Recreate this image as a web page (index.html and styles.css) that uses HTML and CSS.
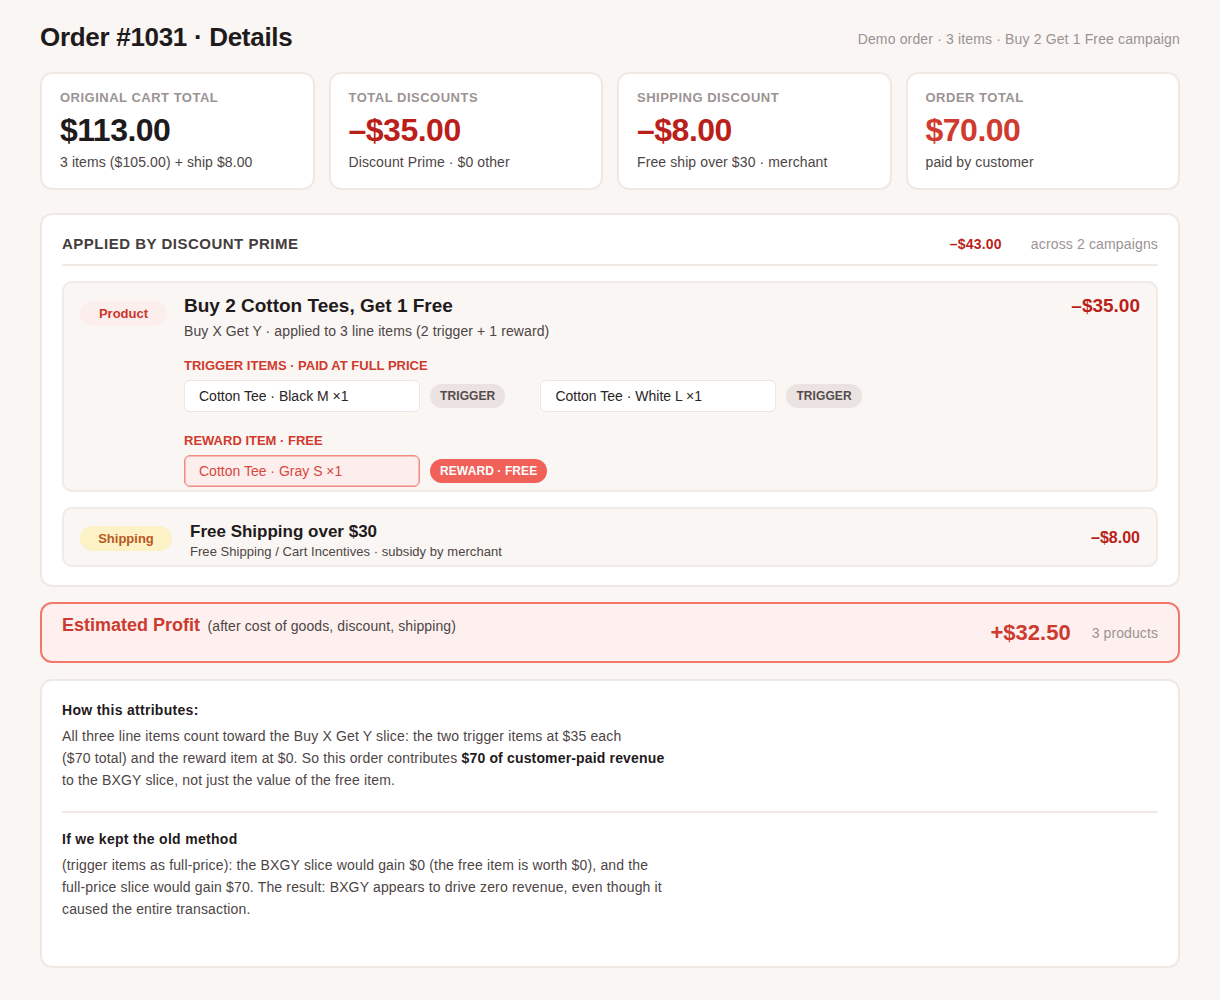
FILE: index.html
```html
<!DOCTYPE html>
<html lang="en">
<head>
    <meta charset="UTF-8">
    <title>Order #1031 · Details</title>
    <link rel="stylesheet" href="styles.css">
</head>
<body>
    <div class="page">
        <div class="page-head">
            <h1>Order #1031 · Details</h1>
            <div class="page-meta">Demo order · 3 items · Buy 2 Get 1 Free campaign</div>
        </div>

        <div class="stats">
            <div class="stat">
                <div class="stat-label">Original cart total</div>
                <div class="stat-value">$113.00</div>
                <div class="stat-sub">3 items ($105.00) + ship $8.00</div>
            </div>
            <div class="stat">
                <div class="stat-label">Total discounts</div>
                <div class="stat-value neg">–$35.00</div>
                <div class="stat-sub">Discount Prime · $0 other</div>
            </div>
            <div class="stat">
                <div class="stat-label">Shipping discount</div>
                <div class="stat-value neg">–$8.00</div>
                <div class="stat-sub">Free ship over $30 · merchant</div>
            </div>
            <div class="stat">
                <div class="stat-label">Order total</div>
                <div class="stat-value total">$70.00</div>
                <div class="stat-sub">paid by customer</div>
            </div>
        </div>

        <div class="panel">
            <div class="panel-head">
                <div class="panel-title">Applied by Discount Prime</div>
                <div class="panel-sum">
                    <span class="sum-amount">–$43.00</span>
                    <span class="sum-note">across 2 campaigns</span>
                </div>
            </div>

            <div class="campaign">
                <span class="badge badge-product">Product</span>
                <div class="campaign-body">
                    <div class="campaign-title">Buy 2 Cotton Tees, Get 1 Free</div>
                    <div class="campaign-sub">Buy X Get Y · applied to 3 line items (2 trigger + 1 reward)</div>

                    <div class="group-label">Trigger items · paid at full price</div>
                    <div class="items">
                        <div class="item-pair">
                            <div class="item">Cotton Tee · Black M ×1</div>
                            <span class="tag">Trigger</span>
                        </div>
                        <div class="item-pair">
                            <div class="item">Cotton Tee · White L ×1</div>
                            <span class="tag">Trigger</span>
                        </div>
                    </div>

                    <div class="group-label">Reward item · free</div>
                    <div class="items">
                        <div class="item-pair">
                            <div class="item item-reward">Cotton Tee · Gray S ×1</div>
                            <span class="tag tag-reward">Reward · Free</span>
                        </div>
                    </div>
                </div>
                <div class="campaign-amount">–$35.00</div>
            </div>

            <div class="campaign campaign-ship">
                <span class="badge badge-ship">Shipping</span>
                <div class="campaign-body">
                    <div class="ship-title">Free Shipping over $30</div>
                    <div class="ship-sub">Free Shipping / Cart Incentives · subsidy by merchant</div>
                </div>
                <div class="ship-amount">–$8.00</div>
            </div>
        </div>

        <div class="profit">
            <div class="profit-left">
                <span class="profit-title">Estimated Profit</span>
                <span class="profit-note">(after cost of goods, discount, shipping)</span>
            </div>
            <div class="profit-right">
                <span class="profit-value">+$32.50</span>
                <span class="profit-count">3 products</span>
            </div>
        </div>

        <div class="notes">
            <div class="note">
                <div class="note-title">How this attributes:</div>
                <p>All three line items count toward the Buy X Get Y slice: the two trigger items at $35 each<br>
                ($70 total) and the reward item at $0. So this order contributes <b>$70 of customer-paid revenue</b><br>
                to the BXGY slice, not just the value of the free item.</p>
            </div>
            <div class="note">
                <div class="note-title">If we kept the old method</div>
                <p>(trigger items as full-price): the BXGY slice would gain $0 (the free item is worth $0), and the<br>
                full-price slice would gain $70. The result: BXGY appears to drive zero revenue, even though it<br>
                caused the entire transaction.</p>
            </div>
        </div>
    </div>
</body>
</html>
```

FILE: styles.css
```css
body {
    margin: 0;
    background: #faf6f3;
    font-family: "Liberation Sans", Arial, sans-serif;
    color: #221c1c;
}
.page {
    padding: 22px 40px 32px;
}
.page-head {
    display: flex;
    justify-content: space-between;
    align-items: center;
    height: 30px;
    margin-bottom: 20px;
}
h1 {
    margin: 0;
    font-size: 26px;
    font-weight: bold;
    letter-spacing: -0.3px;
    color: #1f1a1c;
}
.page-meta {
    font-size: 14px;
    letter-spacing: 0.15px;
    color: #9a9292;
    margin-top: 3px;
}

.stats {
    display: grid;
    grid-template-columns: repeat(4, 1fr);
    gap: 14px;
    margin-bottom: 23px;
}
.stat {
    background: #fff;
    border: 2px solid #f0e8e5;
    border-radius: 12px;
    padding: 16px 18px 18px;
}
.stat-label {
    font-size: 13px;
    font-weight: bold;
    letter-spacing: 0.5px;
    text-transform: uppercase;
    color: #9c9393;
    line-height: 15px;
}
.stat-value {
    font-size: 32px;
    font-weight: bold;
    letter-spacing: -0.5px;
    line-height: 36px;
    margin-top: 7px;
    color: #1f1a1c;
}
.stat-value.neg {
    color: #bb1f1a;
}
.stat-value.total {
    color: #cf3b2e;
}
.stat-sub {
    font-size: 14px;
    letter-spacing: 0.1px;
    line-height: 16px;
    color: #4d4545;
    margin-top: 6px;
}

.panel {
    background: #fff;
    border: 2px solid #f0e8e5;
    border-radius: 12px;
    padding: 0 20px 18px;
    margin-bottom: 15px;
}
.panel-head {
    display: flex;
    justify-content: space-between;
    align-items: center;
    padding: 20px 0 11px;
    line-height: 18px;
    border-bottom: 2px solid #f0e9e6;
    margin-bottom: 15px;
}
.panel-title {
    font-size: 15px;
    font-weight: bold;
    letter-spacing: 0.5px;
    text-transform: uppercase;
    color: #453d3d;
}
.panel-sum {
    display: flex;
    align-items: center;
    gap: 29px;
}
.sum-amount {
    font-size: 14px;
    font-weight: bold;
    letter-spacing: 0.2px;
    color: #bb1f1a;
}
.sum-note {
    font-size: 14px;
    letter-spacing: 0.15px;
    color: #9c9393;
}

.campaign {
    display: flex;
    align-items: flex-start;
    background: #faf6f3;
    border: 2px solid #f1eae7;
    border-radius: 10px;
    padding: 11px 16px 3px 16px;
    margin-bottom: 15px;
}
.campaign:last-child {
    margin-bottom: 0;
}
.badge {
    flex: none;
    display: inline-block;
    border-radius: 13px;
    font-size: 13px;
    font-weight: bold;
    text-align: center;
}
.badge-product {
    width: 87px;
    height: 25px;
    line-height: 25px;
    margin-top: 7px;
    margin-right: 17px;
    background: #fdeeee;
    color: #c9362c;
}
.campaign-body {
    flex: 1;
}
.campaign-title {
    font-size: 19px;
    font-weight: bold;
    color: #1f1a1c;
    line-height: 24px;
}
.campaign-sub {
    font-size: 14px;
    letter-spacing: 0.1px;
    line-height: 17px;
    color: #4d4545;
    margin-top: 5px;
}
.group-label {
    font-size: 13px;
    font-weight: bold;
    text-transform: uppercase;
    line-height: 15px;
    color: #cf3b2e;
    margin-top: 18px;
    margin-bottom: 7px;
}
.group-label + .items + .group-label {
    margin-top: 21px;
}
.items {
    display: flex;
    gap: 35px;
}
.item-pair {
    display: flex;
    align-items: center;
    gap: 10px;
}
.item {
    width: 206px;
    height: 30px;
    line-height: 30px;
    padding: 0 14px;
    background: #fff;
    border: 1px solid #ede5e2;
    border-radius: 6px;
    font-size: 14px;
    color: #2a2424;
}
.item-reward {
    background: #fdeeee;
    border: 1px solid #f18b80;
    box-shadow: inset 0 0 0 0.5px #f18b80;
    color: #d8483c;
}
.tag {
    display: inline-block;
    height: 24px;
    line-height: 24px;
    padding: 0 10px;
    border-radius: 12px;
    background: #ebe3e1;
    color: #554c4c;
    font-size: 12px;
    font-weight: bold;
    letter-spacing: 0.1px;
    text-transform: uppercase;
}
.tag-reward {
    background: #f2605a;
    color: #fff;
}
.campaign-amount {
    font-size: 19px;
    font-weight: bold;
    color: #bb1f1a;
    line-height: 24px;
}

.campaign-ship {
    align-items: center;
    padding: 12px 16px 5px 16px;
}
.badge-ship {
    width: 92px;
    height: 25px;
    line-height: 25px;
    margin-right: 18px;
    margin-top: -5px;
    background: #fdf2c6;
    color: #b9581d;
}
.ship-title {
    font-size: 17px;
    font-weight: bold;
    color: #1f1a1c;
    line-height: 22px;
}
.ship-sub {
    font-size: 13px;
    letter-spacing: 0.05px;
    line-height: 16px;
    color: #4d4545;
    margin-top: 1px;
}
.ship-amount {
    font-size: 16px;
    font-weight: bold;
    color: #bb1f1a;
    margin-top: -5px;
}

.profit {
    display: flex;
    justify-content: space-between;
    align-items: flex-start;
    background: #fef0ee;
    border: 2px solid #f3786c;
    border-radius: 12px;
    padding: 11px 20px 15px;
    margin-bottom: 16px;
}
.profit-left {
    line-height: 21px;
}
.profit-title {
    font-size: 18px;
    font-weight: bold;
    color: #cc3a30;
}
.profit-note {
    font-size: 14px;
    letter-spacing: 0.1px;
    color: #4d4545;
    margin-left: 3px;
}
.profit-right {
    display: flex;
    align-items: center;
    gap: 21px;
    margin-top: 5px;
    line-height: 26px;
}
.profit-value {
    font-size: 22px;
    font-weight: bold;
    color: #cc3a30;
}
.profit-count {
    font-size: 14px;
    letter-spacing: 0.1px;
    color: #9c9393;
}

.notes {
    background: #fff;
    border: 2px solid #f0e8e5;
    border-radius: 12px;
    padding: 19px 20px 46px;
}
.note + .note {
    border-top: 2px solid #f0e9e6;
    margin-top: 20px;
    padding-top: 16px;
}
.note-title {
    font-size: 14px;
    font-weight: bold;
    letter-spacing: 0.3px;
    color: #1f1a1c;
    line-height: 20px;
    margin-bottom: 5px;
}
.note p {
    margin: 0;
    font-size: 14px;
    letter-spacing: 0.16px;
    line-height: 22px;
    color: #4d4545;
}
.note p b {
    color: #1f1a1c;
}
```
